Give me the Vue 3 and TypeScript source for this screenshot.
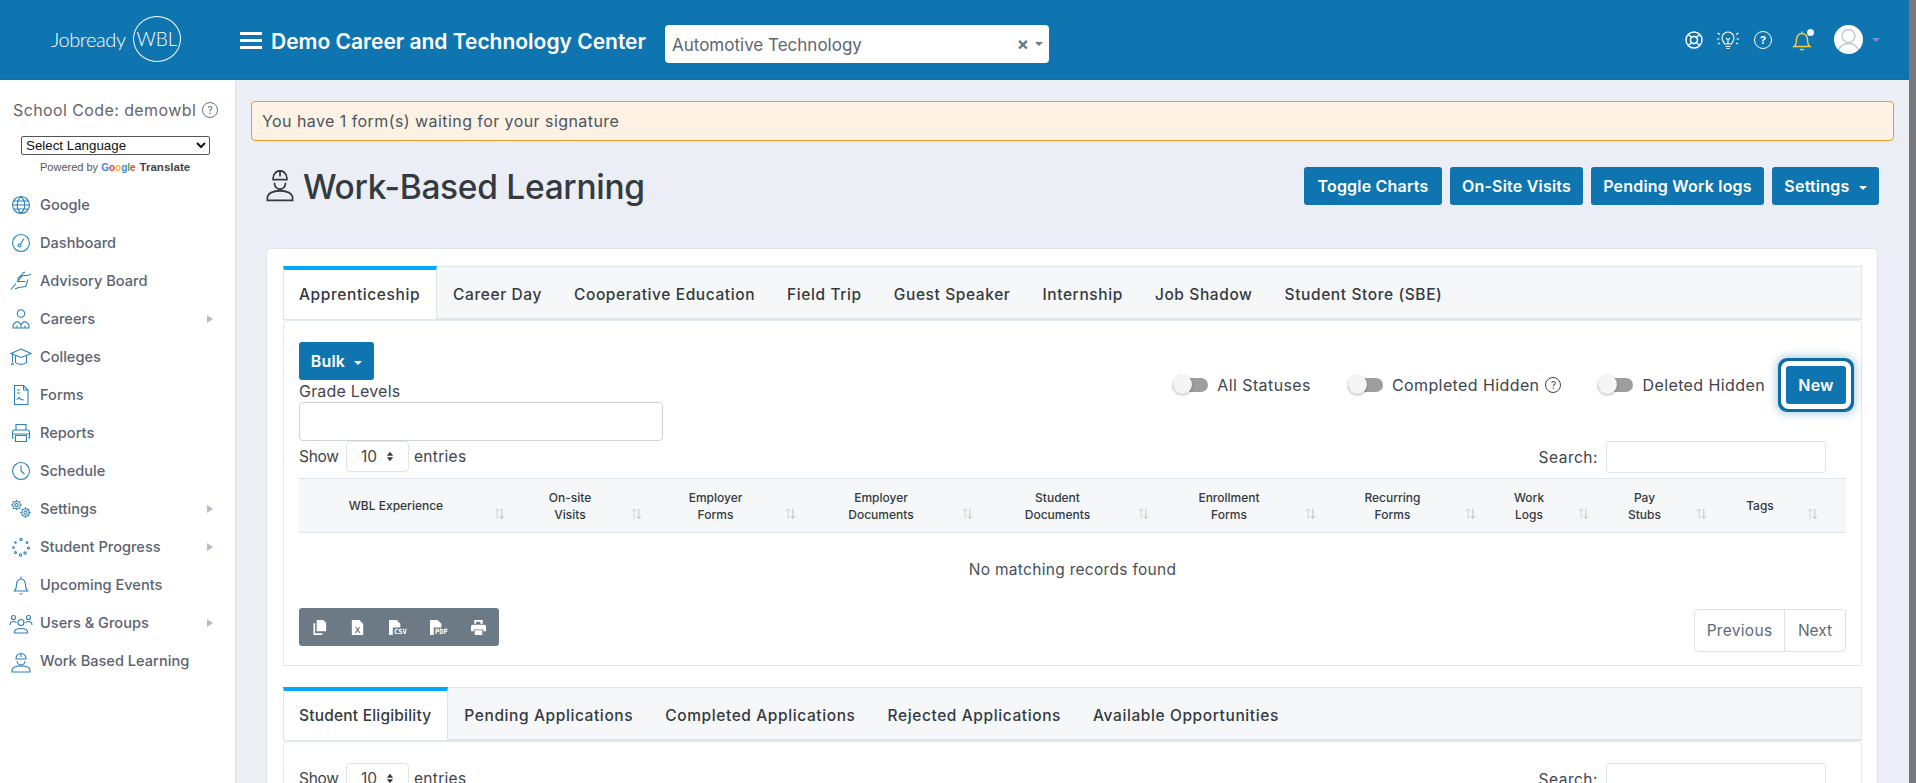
<script setup lang="ts">
// circle as a path, so every icon can be a plain list of d strings
const c = (x: number, y: number, r: number): string =>
  `M${x - r} ${y}a${r} ${r} 0 1 0 ${2 * r} 0a${r} ${r} 0 1 0 ${-2 * r} 0`;

const gear = (x: number, y: number, r: number): string => {
  let d = c(x, y, r) + c(x, y, r * 0.42);
  for (let i = 0; i < 8; i++) {
    const a = (i * Math.PI) / 4;
    d += `M${(x + r * Math.cos(a)).toFixed(1)} ${(y + r * Math.sin(a)).toFixed(1)}L${(x + (r + 1.5) * Math.cos(a)).toFixed(1)} ${(y + (r + 1.5) * Math.sin(a)).toFixed(1)}`;
  }
  return d;
};

const worker = 'M7 9.5a5 5 0 0 1 10 0M6.5 10h11M12 4.5v3.5M8 12a4 4 0 0 0 8 0M3 23v-1.5c0-3 4-4.5 9-4.5s9 1.5 9 4.5V23z';

const icons: Record<string, string> = {
  globe: c(12, 12, 8.5) + 'M3.5 12h17M4.6 8h14.8M4.6 16h14.8M12 3.5c-5 5-5 12 0 17M12 3.5c5 5 5 12 0 17',
  dash: c(12, 12, 8.5) + c(10.5, 14.5, 1.5) + 'M11.5 13.3L15 7.5',
  board: 'M2 20.5l5-6M22 5l-3.500 1.500M6 20l3.500-1.500 7-1c1-2 2-5 2-7M18.500 6.500h-5l-5 6h8M9 12V9l4.500-3.500M16 3l-3 1.500',
  careers: c(12, 6.5, 3.7) + 'M4 21v-1.5c0-3 3-4.5 5-5l3 3 3-3c2 .5 5 2 5 5V21zM12 17.500v3.500M8 21v-2.500M16 21v-2.500',
  cap: 'M12 4L22 8.500 12 12.500 2 8.500zM6.500 11v6.500c2 2.500 9 2.500 11 0V11M3.500 9.500v8M2.500 20c0-2 2-2 2 0',
  form: 'M5.500 2.500h9l4.500 4.500v14.500H5.500zM14.500 2.500V7H19M8 7h3M8 10h3M8 17l2-2.500 2 2 3 .500',
  print: 'M7 9V3.500h10V9M5 17H3.500v-6a2 2 0 0 1 2-2h13a2 2 0 0 1 2 2v6H19M3.500 13h17M6.500 14.500h11v6h-11z',
  clock: c(12, 12, 8.5) + 'M12 6.500V12l3.500 3',
  gears: gear(7.500, 8, 3.800) + gear(16.500, 15.500, 3.800),
  dots: c(12, 4.500, 1.100) + c(18, 7.500, .9) + c(19.500, 13, 1) + c(16, 18, 1.100) + c(11.500, 20, 1.200) + c(6.500, 17.500, 1) + c(4.500, 12.500, .8) + c(6.500, 7.500, .7),
  bell: 'M5.500 18c1.500-1.500 2-3 2-6.500 0-3 2-5.500 4.500-5.500s4.500 2.500 4.500 5.500c0 3.500.5 5 2 6.500zM12 6V3.500M10.500 20.500c.7.8 2.300.8 3 0',
  users: c(12, 11.500, 3) + c(4.500, 6.500, 2) + c(19.500, 6.500, 2) + 'M5.500 22v-1c0-2.500 3-3.500 6.500-3.500s6.500 1 6.500 3.500v1zM1 14c0-2.500 2-3.500 3.500-3.500s2.500.5 3 1.500M23 14c0-2.500-2-3.500-3.500-3.500s-2.500.5-3 1.500',
  worker,
};

interface NavItem {
  label: string;
  icon: string;
  sub?: boolean;
}

const navItems: NavItem[] = [
  { label: 'Google', icon: 'globe' },
  { label: 'Dashboard', icon: 'dash' },
  { label: 'Advisory Board', icon: 'board' },
  { label: 'Careers', icon: 'careers', sub: true },
  { label: 'Colleges', icon: 'cap' },
  { label: 'Forms', icon: 'form' },
  { label: 'Reports', icon: 'print' },
  { label: 'Schedule', icon: 'clock' },
  { label: 'Settings', icon: 'gears', sub: true },
  { label: 'Student Progress', icon: 'dots', sub: true },
  { label: 'Upcoming Events', icon: 'bell' },
  { label: 'Users & Groups', icon: 'users', sub: true },
  { label: 'Work Based Learning', icon: 'worker' },
];

const wblTabs = ['Apprenticeship', 'Career Day', 'Cooperative Education', 'Field Trip', 'Guest Speaker', 'Internship', 'Job Shadow', 'Student Store (SBE)'];
const appTabs = ['Student Eligibility', 'Pending Applications', 'Completed Applications', 'Rejected Applications', 'Available Opportunities'];

const columns: string[][] = [
  ['WBL Experience'],
  ['On-site', 'Visits'],
  ['Employer', 'Forms'],
  ['Employer', 'Documents'],
  ['Student', 'Documents'],
  ['Enrollment', 'Forms'],
  ['Recurring', 'Forms'],
  ['Work', 'Logs'],
  ['Pay', 'Stubs'],
  ['Tags'],
];

const toggles = [
  { label: 'All Statuses', help: false },
  { label: 'Completed Hidden', help: true },
  { label: 'Deleted Hidden', help: false },
];

const googleLetters = [
  { ch: 'G', color: '#4285f4' },
  { ch: 'o', color: '#ea4335' },
  { ch: 'o', color: '#fbbc05' },
  { ch: 'g', color: '#4285f4' },
  { ch: 'l', color: '#34a853' },
  { ch: 'e', color: '#ea4335' },
];
</script>

<template>
  <div class="shell">
    <div class="page">
      <header class="topbar">
        <div class="logo">
          <span class="logo-word">Jobready</span>
          <span class="logo-ring">WBL</span>
        </div>
        <div class="burger"><i></i><i></i><i></i></div>
        <div class="school-name">Demo Career and Technology Center</div>
        <div class="program-select">
          <span class="program-text">Automotive Technology</span>
          <span class="program-clear">×</span>
          <span class="caret grey"></span>
        </div>
        <div class="top-icons">
          <svg class="top-icon" viewBox="0 0 24 24">
            <path d="M4 12a8 8 0 1 0 16 0a8 8 0 1 0 -16 0M8.500 12a3.500 3.500 0 1 0 7 0a3.500 3.500 0 1 0 -7 0M6.300 6.300l3.200 3.200M17.700 6.300l-3.200 3.200M6.300 17.700l3.200-3.200M17.700 17.700l-3.200-3.200" />
          </svg>
          <svg class="top-icon thin" viewBox="0 0 24 24">
            <path d="M8.500 16c-.5-2-2.500-3-2.500-6a6 6 0 0 1 12 0c0 3-2 4-2.500 6zM9.500 18.500h5M10.500 20.500h3M1.500 5l2.500 1.500M22.500 5L20 6.500M1 11h2.500M23 11h-2.500M2 16l2-1M22 16l-2-1M10 10l2 2 2-2M12 12v4" />
          </svg>
          <span class="top-help">?</span>
          <span class="bell-wrap">
            <svg class="top-icon yellow" viewBox="0 0 24 24">
              <path d="M4 18.500c2-1.500 2.500-3.500 2.500-7 0-3.500 2.500-6 5.500-6s5.500 2.500 5.500 6c0 3.500.5 5.500 2.500 7zM12 5.500V3.500M10 21c1 1 3 1 4 0" />
            </svg>
            <i class="bell-dot"></i>
          </span>
          <span class="avatar">
            <svg viewBox="0 0 29 29">
              <path class="avatar-line" d="M8 11a6.500 6.500 0 1 0 13 0a6.500 6.500 0 1 0 -13 0M4.500 25c2-5 6-6.500 10-6.500s8 1.500 10 6.500" />
            </svg>
          </span>
          <span class="caret lilac"></span>
        </div>
      </header>

      <div class="below">
        <aside class="sidebar">
          <div class="school-code">School Code: demowbl <span class="help-dot">?</span></div>
          <select class="lang-select">
            <option>Select Language</option>
          </select>
          <div class="powered">
            Powered by
            <span class="google"><span v-for="(l, i) in googleLetters" :key="i" :style="{ color: l.color }">{{ l.ch }}</span></span>
            <b>Translate</b>
          </div>
          <nav class="nav">
            <a v-for="item in navItems" :key="item.label" class="nav-item">
              <svg class="nav-icon" viewBox="0 0 24 24"><path :d="icons[item.icon]" /></svg>
              <span class="nav-label">{{ item.label }}</span>
              <span v-if="item.sub" class="nav-arrow"></span>
            </a>
          </nav>
        </aside>

        <main class="main">
          <div class="alert">You have 1 form(s) waiting for your signature</div>

          <div class="title-row">
            <h1 class="title">
              <svg class="title-icon" viewBox="2 4 20 20" preserveAspectRatio="none"><path :d="worker" /></svg>
              <span class="title-text">Work-Based Learning</span>
            </h1>
            <div class="title-actions">
              <button class="btn w138">Toggle Charts</button>
              <button class="btn w133">On-Site Visits</button>
              <button class="btn w173">Pending Work logs</button>
              <button class="btn w107">Settings <span class="caret"></span></button>
            </div>
          </div>

          <section class="card">
            <div class="tabs">
              <div v-for="(t, i) in wblTabs" :key="t" class="tab" :class="{ active: i === 0 }">{{ t }}</div>
            </div>
            <div class="panel">
              <div class="controls">
                <div class="controls-left">
                  <button class="btn bulk">Bulk <span class="caret"></span></button>
                  <label class="grade-label">Grade Levels</label>
                  <input class="grade-input" type="text" />
                </div>
                <div class="controls-right">
                  <div v-for="t in toggles" :key="t.label" class="toggle-row">
                    <span class="toggle"><i></i></span>
                    <span class="toggle-label">{{ t.label }}</span>
                    <span v-if="t.help" class="help-dot dark">?</span>
                  </div>
                  <button class="btn new">New</button>
                </div>
              </div>

              <div class="dt-top">
                <div class="show-entries">
                  <span class="show-text">Show</span>
                  <span class="page-size">10<svg viewBox="0 0 10 14"><path d="M5 1l4 5H1zM5 13L1 8h8z" /></svg></span>
                  <span class="entries-text">entries</span>
                </div>
                <div class="search">Search: <input type="text" /></div>
              </div>

              <div class="dt-head">
                <div v-for="(col, i) in columns" :key="i" class="dt-th">
                  <span v-for="line in col" :key="line">{{ line }}</span>
                  <svg class="sort" viewBox="0 0 12 12">
                    <path d="M3.500 11.500V1M1 3.500L3.500 1 6 3.500" />
                    <path class="sort-down" d="M8.500 1v10.500M6 9l2.500 2.500L11 9" />
                  </svg>
                </div>
              </div>
              <div class="dt-empty">No matching records found</div>

              <div class="dt-foot">
                <div class="export">
                  <svg viewBox="0 0 18 18"><path d="M6 1h7l3 3v9H6z" /><path class="hollow" d="M3.500 4.500V16H12" /></svg>
                  <svg viewBox="0 0 18 18"><path d="M3 1h8l4 4v12H3z" /><text x="9" y="14.500" class="doc-x">X</text></svg>
                  <svg viewBox="0 0 22 18" class="wide"><path d="M2 1h8l4 4v12H2z" /><rect x="6" y="9" width="16" height="8" class="label-bg" /><text x="14" y="16" class="doc-label">CSV</text></svg>
                  <svg viewBox="0 0 22 18" class="wide"><path d="M2 1h8l4 4v12H2z" /><rect x="6" y="9" width="16" height="8" class="label-bg" /><text x="14" y="16" class="doc-label">PDF</text></svg>
                  <svg viewBox="0 0 18 18"><path d="M4.500 1h9v4h-2.500V3h-4.500v2H4.500zM3 6h12a2 2 0 0 1 2 2v5h-3v-2H4v2H1V8a2 2 0 0 1 2-2zM5 12h8v5H5z" /></svg>
                </div>
                <div class="pager">
                  <span class="pager-btn prev">Previous</span>
                  <span class="pager-btn next">Next</span>
                </div>
              </div>
            </div>

            <div class="tabs second">
              <div v-for="(t, i) in appTabs" :key="t" class="tab" :class="{ active: i === 0 }">{{ t }}</div>
            </div>
            <div class="panel">
              <div class="dt-top flush">
                <div class="show-entries">
                  <span class="show-text">Show</span>
                  <span class="page-size">10<svg viewBox="0 0 10 14"><path d="M5 1l4 5H1zM5 13L1 8h8z" /></svg></span>
                  <span class="entries-text">entries</span>
                </div>
                <div class="search">Search: <input type="text" /></div>
              </div>
            </div>
          </section>
        </main>
      </div>
    </div>
    <div class="scroll-strip"></div>
  </div>
</template>

<style>
html,
body {
  margin: 0;
  overflow: hidden;
}
</style>

<style scoped>
.shell {
  display: flex;
  height: 100vh;
  overflow: hidden;
  font-family: Inter, "Liberation Sans", sans-serif;
  color: #343a40;
}

.page {
  flex: 1;
  min-width: 0;
  display: flex;
  flex-direction: column;
}

.scroll-strip {
  width: 7px;
  background: #77787c;
}

/* top bar */
.topbar {
  flex: none;
  height: 80px;
  box-sizing: border-box;
  border-bottom: 1px solid #3f55a5;
  background: #0f75b0;
  display: flex;
  align-items: center;
  color: #fff;
}

.logo {
  width: 240px;
  box-sizing: border-box;
  padding-left: 51px;
  display: flex;
  align-items: center;
  font-family: Lato, sans-serif;
  font-weight: 300;
  margin-top: -2px;
}

.logo-word {
  font-size: 20px;
  letter-spacing: -0.4px;
  width: 82px;
}

.logo-ring {
  width: 48px;
  height: 46px;
  border: 1px solid #fff;
  border-radius: 50%;
  box-sizing: border-box;
  display: flex;
  align-items: center;
  justify-content: center;
  font-size: 19px;
}

.burger {
  width: 22px;
  margin-top: 2px;
  display: flex;
  flex-direction: column;
  gap: 4px;
}

.burger i {
  height: 3px;
  background: #fff;
}

.school-name {
  margin: 3px 0 0 9px;
  width: 374px;
  font-size: 21px;
  font-weight: 600;
  white-space: nowrap;
}

.program-select {
  margin: 8px 0 0 20px;
  width: 384px;
  height: 38px;
  box-sizing: border-box;
  background: #fff;
  border-radius: 4px;
  display: flex;
  align-items: center;
  padding: 0 6px 0 7px;
  color: #5d6670;
  font-size: 17px;
}

.program-text {
  flex: 1;
  padding-top: 2px;
}

.program-clear {
  font-size: 18px;
  font-weight: 700;
  color: #6c757d;
  margin-right: 6px;
}

.caret {
  display: inline-block;
  width: 0;
  height: 0;
  border-left: 4px solid transparent;
  border-right: 4px solid transparent;
  border-top: 4px solid #fff;
  vertical-align: middle;
  margin-left: 5px;
}

.caret.grey {
  border-top-color: #777;
  margin-left: 0;
}

.caret.lilac {
  border-top-color: #7f8fce;
  border-left-width: 4px;
  margin-left: 9px;
}

.top-icons {
  margin-left: auto;
  padding-right: 29px;
  display: flex;
  align-items: center;
  gap: 10px;
}

.top-icon {
  width: 24px;
  height: 24px;
  fill: none;
  stroke: #fff;
  stroke-width: 1.4;
  display: block;
}

.top-icon.thin {
  stroke-width: 1.1;
}

.top-icon.yellow {
  stroke: #f3cf45;
}

.top-help {
  width: 16px;
  height: 16px;
  margin: 0 4px;
  border: 1.4px solid #fff;
  border-radius: 50%;
  font-size: 11px;
  font-weight: 700;
  display: flex;
  align-items: center;
  justify-content: center;
}

.bell-wrap {
  position: relative;
  margin: 0 10px 0 4px;
}

.bell-dot {
  position: absolute;
  top: 1px;
  right: 0;
  width: 7px;
  height: 7px;
  border-radius: 50%;
  background: #f2f0fb;
}

.avatar {
  width: 29px;
  height: 29px;
  border-radius: 50%;
  background: #fff;
  overflow: hidden;
  margin-right: -10px;
  margin-left: 0;
}

.avatar svg {
  display: block;
}

.avatar-line {
  fill: none;
  stroke: #c3c8cd;
  stroke-width: 1.4;
}

/* below the top bar */
.below {
  flex: 1;
  min-height: 0;
  display: flex;
}

.sidebar {
  flex: none;
  width: 236px;
  box-sizing: border-box;
  border-right: 1px solid #d5e0e8;
  background: #fff;
}

.school-code {
  margin-top: 20px;
  padding-left: 13px;
  height: 20px;
  display: flex;
  align-items: center;
  gap: 6px;
  font-size: 16px;
  letter-spacing: 0.4px;
  color: #666;
  white-space: nowrap;
}

.help-dot {
  width: 14px;
  height: 14px;
  border: 1px solid #6b7280;
  border-radius: 50%;
  font-size: 10px;
  letter-spacing: 0;
  display: inline-flex;
  align-items: center;
  justify-content: center;
  flex: none;
}

.lang-select {
  display: block;
  margin: 16px 0 0 21px;
  width: 189px;
  height: 19px;
  padding: 0;
  font-family: "Liberation Sans", sans-serif;
  font-size: 13.33px;
  color: #111;
  background: #fff;
  border: 1px solid #555;
  border-radius: 2px;
}

.powered {
  margin-top: 6px;
  padding-left: 40px;
  height: 13px;
  line-height: 13px;
  font-family: "Liberation Sans", sans-serif;
  font-size: 11px;
  color: #555;
  white-space: nowrap;
}

.powered b {
  margin-left: 4px;
  color: #444;
  font-size: 11.500px;
}

.google {
  font-weight: 700;
  font-size: 10px;
}

.nav {
  margin-top: 12px;
}

.nav-item {
  height: 38px;
  display: flex;
  align-items: center;
  padding-left: 8.5px;
  position: relative;
}

.nav-icon {
  width: 24px;
  height: 24px;
  flex: none;
  fill: none;
  stroke: #2a80b9;
  stroke-width: 1.1;
}

.nav-label {
  margin-left: 7.5px;
  font-size: 14.600px;
  font-weight: 500;
  color: #5c6370;
  white-space: nowrap;
}

.nav-arrow {
  position: absolute;
  left: 207px;
  top: 15px;
  border-left: 6px solid #b4bcc4;
  border-top: 4.5px solid transparent;
  border-bottom: 4.5px solid transparent;
}

.main {
  flex: 1;
  min-width: 0;
  background: #ebeef4;
  padding-top: 21px;
}

.alert {
  margin: 0 15px;
  height: 40px;
  box-sizing: border-box;
  border: 1px solid #f09a2b;
  border-radius: 4px;
  background: #fdf2e3;
  padding-left: 10px;
  display: flex;
  align-items: center;
  font-size: 16px;
  letter-spacing: 0.43px;
  color: #4a5560;
}

.title-row {
  margin-top: 26px;
  height: 38px;
  padding: 0 30px;
  display: flex;
  justify-content: space-between;
  align-items: center;
}

.title {
  margin: 0;
  display: flex;
  align-items: center;
  gap: 9px;
  font-size: 33.500px;
  line-height: 38px;
  font-weight: 500;
  letter-spacing: -0.3px;
  white-space: nowrap;
  color: #343a40;
}

.title-text {
  padding-top: 2px;
}

.title-icon {
  width: 28px;
  height: 32px;
  fill: none;
  stroke: #343a40;
  stroke-width: 1.2;
}

.title-actions {
  display: flex;
  gap: 8px;
}

.btn {
  height: 38px;
  padding: 0;
  border: 0;
  border-radius: 3px;
  background: #0f75b0;
  color: #fff;
  font-family: inherit;
  font-size: 16px;
  font-weight: 600;
  letter-spacing: 0.2px;
  white-space: nowrap;
}

.w138 { width: 138px; }
.w133 { width: 133px; }
.w173 { width: 173px; }
.w107 { width: 107px; }

.card {
  margin: 43px 31px 0 30px;
  padding: 17px 15px 17px 16px;
  border: 1px solid #dfe5ea;
  border-radius: 4px;
  background: #fff;
}

.tabs {
  height: 54px;
  box-sizing: border-box;
  border: 1px solid #dde4ea;
  border-bottom-width: 2px;
  background: #f5f7f9;
  display: flex;
}

.tabs.second {
  margin-top: 21px;
}

.tab {
  padding: 4px 16px 0;
  display: flex;
  align-items: center;
  font-size: 15.500px;
  letter-spacing: 0.6px;
  font-weight: 500;
  color: #343a40;
  white-space: nowrap;
}

.tab.active {
  margin: -1px 0 -1px -1px;
  padding: 0 16px 0 15px;
  background: #fff;
  border-top: 4px solid #00a8ff;
  border-left: 1px solid #dde4ea;
  border-right: 1px solid #dde4ea;
}

.second .tab.active {
  letter-spacing: 0.2px;
}

.panel {
  border: 1px solid #e2e7ec;
  border-radius: 4px 4px 0 0;
  padding: 21px 15px 13px;
}

.controls {
  display: flex;
  justify-content: space-between;
  align-items: flex-start;
}

.controls-left {
  width: 364px;
  display: flex;
  flex-direction: column;
  align-items: flex-start;
}

.bulk {
  width: 75px;
}

.grade-label {
  margin-top: 1px;
  height: 21px;
  line-height: 21px;
  font-size: 16px;
  letter-spacing: 0.2px;
  color: #3f454b;
}

.grade-input {
  width: 100%;
  height: 39px;
  box-sizing: border-box;
  border: 1px solid #ced4da;
  border-radius: 4px;
}

.controls-right {
  margin-top: 24px;
  display: flex;
  align-items: center;
  gap: 37px;
}

.toggle-row {
  display: flex;
  align-items: center;
}

.toggle {
  position: relative;
  width: 35px;
  height: 14px;
  border-radius: 7px;
  background: #9e9e9e;
  margin-right: 9px;
}

.toggle i {
  position: absolute;
  left: 0;
  top: -3px;
  width: 19px;
  height: 19px;
  border-radius: 50%;
  background: #f5f5f5;
  box-shadow: 0 1px 3px rgba(0, 0, 0, 0.3);
}

.toggle-label {
  font-size: 16px;
  letter-spacing: 0.4px;
  color: #3f454b;
  white-space: nowrap;
}

.help-dot.dark {
  margin-left: 6px;
  border-color: #3f454b;
  color: #3f454b;
}

.new {
  width: 60px;
  margin-left: -16px;
  box-shadow: 0 0 0 5px #fff, 0 0 0 8px #0f6ca3, 0 0 10px 9px rgba(15, 117, 176, 0.4);
}

.dt-top {
  height: 32px;
  display: flex;
  justify-content: space-between;
  padding-right: 20px;
  font-size: 15.500px;
  color: #3f454b;
}

.show-entries {
  height: 31px;
  display: flex;
  align-items: center;
}

.show-text {
  width: 47px;
  letter-spacing: -0.3px;
}

.entries-text {
  margin-left: 5px;
  letter-spacing: 0.3px;
}

.page-size {
  width: 63px;
  height: 31px;
  box-sizing: border-box;
  border: 1px solid #dde4ea;
  border-radius: 4px;
  padding: 0 14px;
  display: flex;
  align-items: center;
  justify-content: space-between;
}

.page-size svg {
  width: 8px;
  height: 11px;
  fill: #343a40;
}

.search {
  display: flex;
  align-items: center;
  gap: 8px;
  letter-spacing: 0.5px;
}

.search input {
  width: 220px;
  height: 32px;
  box-sizing: border-box;
  border: 1px solid #dde4ea;
  border-radius: 3px;
}

.dt-head {
  margin-top: 5px;
  height: 55px;
  box-sizing: border-box;
  border-top: 1px solid #dde4ea;
  border-bottom: 1px solid #dde4ea;
  background: #f5f7f9;
  display: grid;
  grid-template-columns: 211px 137px 154px 177px 176px 167px 160px 113px 118px 134px;
}

.dt-th {
  position: relative;
  padding: 0 21px 0 4px;
  display: flex;
  flex-direction: column;
  align-items: center;
  justify-content: center;
  font-size: 12px;
  line-height: 17px;
  font-weight: 500;
  color: #343a40;
}

.dt-th:last-child {
  padding-right: 42px;
}

.sort {
  position: absolute;
  right: 5px;
  bottom: 13px;
  width: 11px;
  height: 11px;
  fill: none;
  stroke: #c8ced4;
  stroke-width: 1;
}

.sort-down {
  stroke: #b8bec5;
}

.dt-th:last-child .sort {
  right: 28px;
}

.dt-empty {
  height: 72px;
  display: flex;
  align-items: center;
  justify-content: center;
  font-size: 15.500px;
  letter-spacing: 0.3px;
  color: #4a5057;
}

.dt-foot {
  margin-top: 3px;
  display: flex;
  justify-content: space-between;
  align-items: flex-start;
}

.export {
  width: 200px;
  height: 38px;
  box-sizing: border-box;
  padding: 0 12px;
  background: #6c7a85;
  border-radius: 3px;
  display: flex;
  align-items: center;
  justify-content: space-between;
}

.export svg {
  width: 17px;
  height: 17px;
  fill: #fff;
}

.export svg.wide {
  width: 21px;
}

.hollow {
  fill: none;
  stroke: #fff;
  stroke-width: 1.800;
}

.doc-x {
  fill: #6c7a85;
  font-size: 9px;
  font-weight: 700;
  text-anchor: middle;
  font-family: "Liberation Sans", sans-serif;
}

.label-bg {
  fill: #6c7a85;
}

.doc-label {
  fill: #fff;
  font-size: 7.500px;
  font-weight: 700;
  text-anchor: middle;
  font-family: "DejaVu Sans Mono", monospace;
}

.pager {
  margin-top: 1px;
  height: 43px;
  box-sizing: border-box;
  border: 1px solid #dee2e6;
  border-radius: 4px;
  display: flex;
}

.pager-btn {
  display: flex;
  align-items: center;
  justify-content: center;
  font-size: 15.500px;
  color: #5c6b7c;
}

.prev {
  width: 89px;
  border-right: 1px solid #dee2e6;
  letter-spacing: 0.3px;
}

.next {
  width: 60px;
}

.flush {
  margin-bottom: 40px;
}
</style>
